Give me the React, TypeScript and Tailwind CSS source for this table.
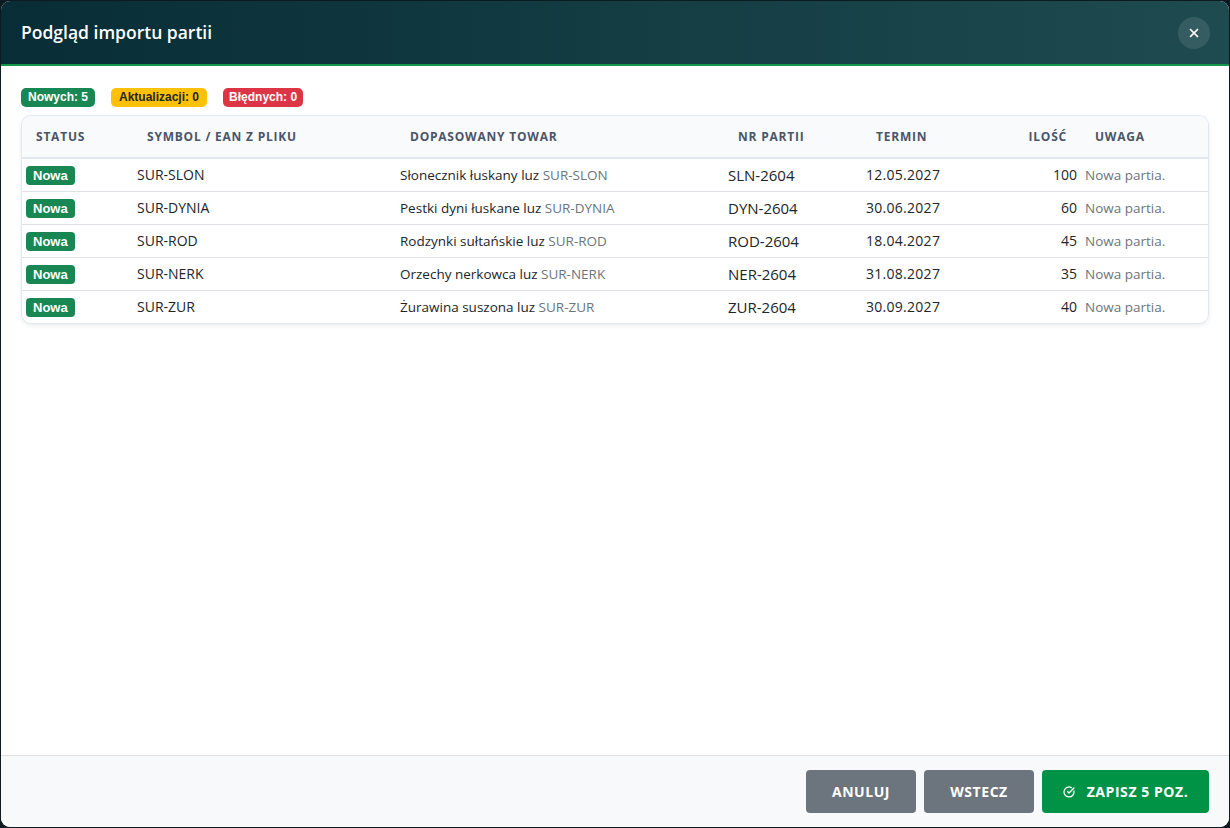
import { CircleCheckBig, X } from "lucide-react";

type Row = {
    symbol: string;
    name: string;
    code: string;
    batch: string;
    date: string;
    qty: number;
};

const rows: Row[] = [
    { symbol: "SUR-SLON", name: "Słonecznik łuskany luz", code: "SUR-SLON", batch: "SLN-2604", date: "12.05.2027", qty: 100 },
    { symbol: "SUR-DYNIA", name: "Pestki dyni łuskane luz", code: "SUR-DYNIA", batch: "DYN-2604", date: "30.06.2027", qty: 60 },
    { symbol: "SUR-ROD", name: "Rodzynki sułtańskie luz", code: "SUR-ROD", batch: "ROD-2604", date: "18.04.2027", qty: 45 },
    { symbol: "SUR-NERK", name: "Orzechy nerkowca luz", code: "SUR-NERK", batch: "NER-2604", date: "31.08.2027", qty: 35 },
    { symbol: "SUR-ZUR", name: "Żurawina suszona luz", code: "SUR-ZUR", batch: "ZUR-2604", date: "30.09.2027", qty: 40 },
];

const th = "py-0 px-[14px] text-left text-[12px] font-bold uppercase tracking-[0.065em] text-[#4a5568]";
const td = "py-0 px-[4px] leading-[20px]";

export default function App() {
    return (
        <div className="h-[828px] w-full bg-[#0d1b21] p-px font-['Open_Sans',sans-serif]">
            <div className="flex h-full flex-col overflow-hidden rounded-[9px] bg-white">
                {/* header */}
                <div className="flex h-[63px] shrink-0 items-center justify-between bg-gradient-to-r from-[#082d36] to-[#1e4b50] pl-5 pr-[19px]">
                    <h1 className="text-[17.5px] font-semibold text-white">Podgląd importu partii</h1>
                    <button className="flex h-8 w-8 items-center justify-center rounded-full bg-white/10 text-white">
                        <X size={14} strokeWidth={3} />
                    </button>
                </div>
                <div className="h-[2px] shrink-0 bg-[#129649]" />

                {/* body */}
                <div className="flex-1 px-5 pt-[22px]">
                    <div className="flex gap-4 font-['Liberation_Sans',sans-serif] text-[12px] font-bold">
                        <span className="rounded-[5px] bg-[#198754] px-[7px] py-[2px] leading-[15px] text-white">Nowych: 5</span>
                        <span className="rounded-[5px] bg-[#ffc107] px-[8px] py-[2px] leading-[15px] text-[#212529]">Aktualizacji: 0</span>
                        <span className="rounded-[5px] bg-[#dc3545] px-[6px] py-[2px] leading-[15px] text-white">Błędnych: 0</span>
                    </div>

                    <div className="mt-2 overflow-hidden rounded-[10px] border border-[#e2e8f0] shadow-[0_2px_4px_rgba(15,23,42,0.08)]">
                        <table className="w-full border-collapse text-[#212529]">
                            <colgroup>
                                <col className="w-[111px]" />
                                <col className="w-[263px]" />
                                <col className="w-[328px]" />
                                <col className="w-[138px]" />
                                <col className="w-[140px]" />
                                <col className="w-[79px]" />
                                <col />
                            </colgroup>
                            <thead>
                                <tr className="h-[42px] border-b-2 border-[#e2e8f0] bg-[#f8fafc]">
                                    <th className={th}>Status</th>
                                    <th className={th}>Symbol / EAN z pliku</th>
                                    <th className={th}>Dopasowany towar</th>
                                    <th className={th}>Nr partii</th>
                                    <th className={th}>Termin</th>
                                    <th className={th + " !text-right"}>Ilość</th>
                                    <th className={th}>Uwaga</th>
                                </tr>
                            </thead>
                            <tbody>
                                {rows.map((r, i) => (
                                    <tr key={r.symbol} className={"h-[33px] " + (i < rows.length - 1 ? "border-b border-[#dee2e6]" : "")}>
                                        <td className={td}>
                                            <span className="inline-block rounded-[4px] bg-[#198754] px-[7px] align-middle font-['Liberation_Sans',sans-serif] text-[13px] font-bold leading-[19px] text-white">
                                                Nowa
                                            </span>
                                        </td>
                                        <td className={td + " text-[14px]"}>{r.symbol}</td>
                                        <td className={td + " text-[13.5px]"}>
                                            {r.name} <span className="text-[#6c757d]">{r.code}</span>
                                        </td>
                                        <td className={td + " text-[15px]"}>{r.batch}</td>
                                        <td className={td + " text-[14px] tracking-[0.02em]"}>{r.date}</td>
                                        <td className={td + " text-right text-[14px]"}>{r.qty}</td>
                                        <td className={td + " text-[13.5px] text-[#6c757d]"}>Nowa partia.</td>
                                    </tr>
                                ))}
                            </tbody>
                        </table>
                    </div>
                </div>

                {/* footer */}
                <div className="flex h-[72px] shrink-0 items-center justify-end gap-2 border-t border-[#dee2e6] bg-[#f8f9fa] pr-5">
                    <button className="h-[43px] w-[110px] rounded-[4px] bg-[#6c757d] text-[14px] font-bold tracking-[0.04em] text-white">
                        ANULUJ
                    </button>
                    <button className="h-[43px] w-[110px] rounded-[4px] bg-[#6c757d] text-[14px] font-bold tracking-[0.04em] text-white">
                        WSTECZ
                    </button>
                    <button className="flex h-[43px] w-[167px] items-center justify-center gap-3 rounded-[4px] bg-[#009245] text-[14px] font-bold tracking-[0.04em] text-white">
                        <CircleCheckBig size={12} strokeWidth={2.5} />
                        ZAPISZ 5 POZ.
                    </button>
                </div>
            </div>
        </div>
    );
}
